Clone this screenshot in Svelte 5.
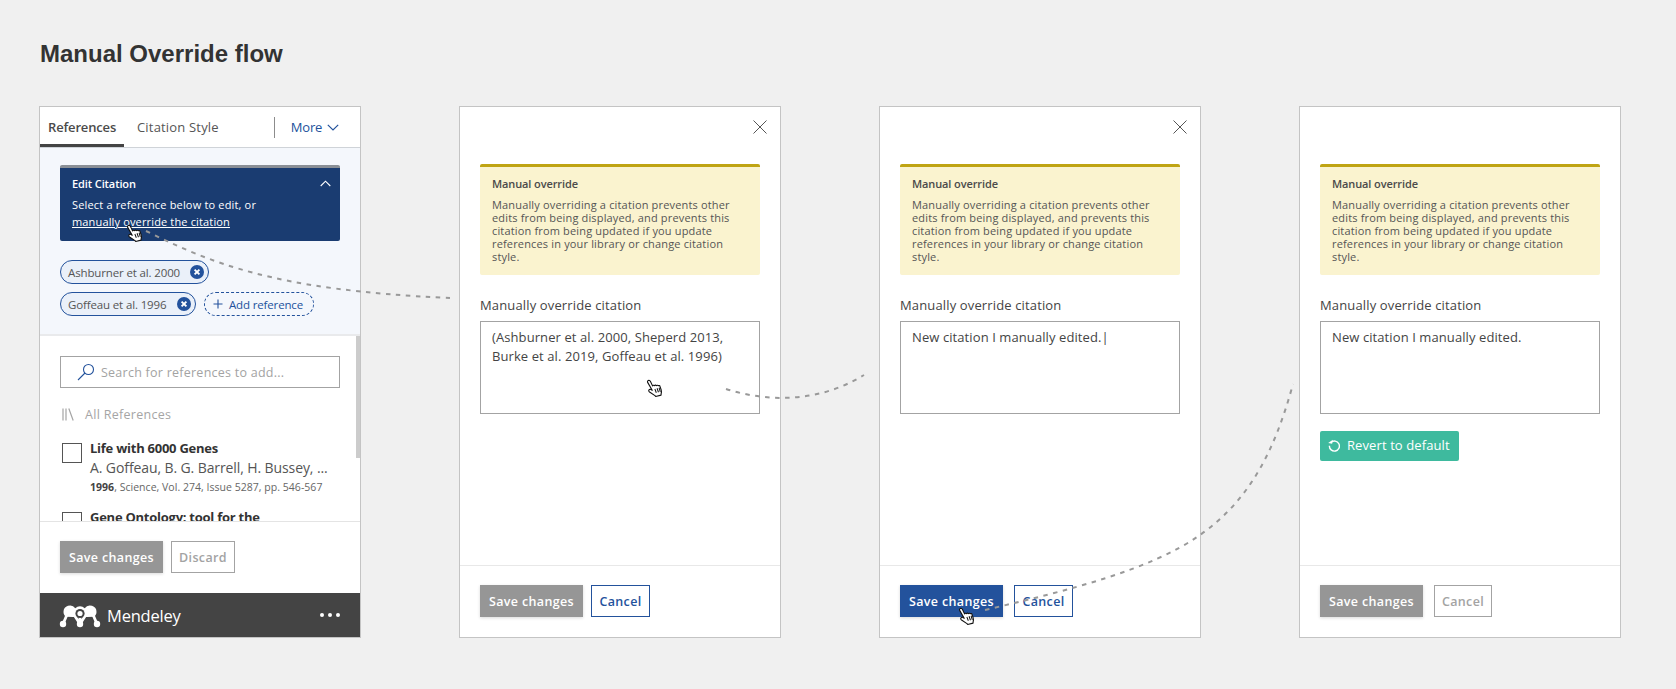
<script>
  const warningLines = [
    'Manually overriding a citation prevents other',
    'edits from being displayed, and prevents this',
    'citation from being updated if you update',
    'references in your library or change citation',
    'style.'
  ];
  const cursors = [
    { x: 126, y: 223 },
    { x: 646, y: 378 },
    { x: 958, y: 606 }
  ];
</script>

{#snippet hand(x, y)}
  <g transform="translate({x} {y}) rotate(-14 8 10)">
    <path class="hand" d="M4.2 1.4c.9-.3 1.7.3 1.9 1.2l1 5c.5-.6 1.5-.5 1.9.2.6-.5 1.6-.3 1.9.4.7-.4 1.6-.1 1.8.7.7-.3 1.4.1 1.5.9l.3 3.6c.1 1.6-.3 2.8-1 4l-.4 1.2H7.6l-.5-1-4.4-4.8c-.7-.8-.6-1.7 0-2.2.6-.5 1.4-.4 2 .2l1 1L3.2 3c-.2-.7.2-1.4 1-1.6z" />
    <path class="hand-lines" d="M8.6 11.2l.5 4M10.9 11l.4 4.2M13 11l.2 4.2" />
  </g>
{/snippet}

{#snippet warning()}
  <div class="warning">
    <div class="warning-title">Manual override</div>
    <p>{#each warningLines as l}<span>{l}</span>{/each}</p>
  </div>
  <div class="field-label">Manually override citation</div>
{/snippet}

{#snippet close()}
  <div class="close-row">
    <svg width="14" height="14" viewBox="0 0 14 14"><path d="M.5.5l13 13M13.5.5l-13 13" fill="none" stroke="#555" stroke-width="1" /></svg>
  </div>
{/snippet}

<main>
  <h1>Manual Override flow</h1>
  <div class="flow">
    <section class="panel">
      <nav class="tabs">
        <span class="tab active">References</span>
        <span class="tab">Citation Style</span>
        <span class="divider"></span>
        <span class="more">More
          <svg width="12" height="7" viewBox="0 0 12 7"><path d="M.8.8L6 6l5.2-5.2" fill="none" stroke="#23529c" stroke-width="1.2" /></svg>
        </span>
      </nav>
      <div class="citation-area">
        <div class="edit-box">
          <div class="edit-head">
            <strong>Edit Citation</strong>
            <svg width="11" height="7" viewBox="0 0 11 7"><path d="M.7 6L5.500 1.200 10.300 6" fill="none" stroke="#fff" stroke-width="1.100" /></svg>
          </div>
          <div class="edit-text">Select a reference below to edit, or</div>
          <a href="#top" class="edit-link">manually override the citation</a>
        </div>
        <div class="chips first">
          <span class="chip one">Ashburner et al. 2000
            <svg width="14" height="14" viewBox="0 0 14 14"><circle cx="7" cy="7" r="7" fill="#23529c" /><path d="M4.600 4.600l4.800 4.800M9.400 4.600l-4.800 4.800" stroke="#fff" stroke-width="1.900" /></svg>
          </span>
        </div>
        <div class="chips">
          <span class="chip two">Goffeau et al. 1996
            <svg width="14" height="14" viewBox="0 0 14 14"><circle cx="7" cy="7" r="7" fill="#23529c" /><path d="M4.600 4.600l4.800 4.800M9.400 4.600l-4.800 4.800" stroke="#fff" stroke-width="1.900" /></svg>
          </span>
          <span class="add"><svg width="10" height="10" viewBox="0 0 10 10"><path d="M5 .5v9M.5 5h9" stroke="#23529c" stroke-width="1.100" /></svg>Add reference</span>
        </div>
      </div>
      <div class="list-area">
        <div class="scrollbar"></div>
        <div class="search">
          <svg width="18" height="18" viewBox="0 0 18 18"><circle cx="11.500" cy="6.500" r="5" fill="none" stroke="#23529c" stroke-width="1.100" /><path d="M8 10L1 17" stroke="#23529c" stroke-width="1.100" /></svg>
          <span>Search for references to add...</span>
        </div>
        <div class="all-refs">
          <svg width="12" height="13" viewBox="0 0 12 13"><path d="M1 .5v12M4 .5v12M6.800.5l4.400 12" fill="none" stroke="#a5a5a5" stroke-width="1.200" /></svg>
          All References
        </div>
        <div class="ref">
          <span class="check"></span>
          <div>
            <div class="ref-title">Life with 6000 Genes</div>
            <div class="ref-authors">A. Goffeau, B. G. Barrell, H. Bussey, ...</div>
            <div class="ref-meta"><b>1996</b>, Science, Vol. 274, Issue 5287, pp. 546-567</div>
          </div>
        </div>
        <div class="ref second">
          <span class="check"></span>
          <div class="ref-title">Gene Ontology: tool for the</div>
        </div>
      </div>
      <div class="footer short">
        <button class="btn grey">Save changes</button>
        <button class="btn ghost discard">Discard</button>
      </div>
      <div class="brand">
        <svg class="logo" width="42" height="26" viewBox="0 0 42 26">
          <g fill="none" stroke="#fff" stroke-width="2.800" stroke-linecap="round">
            <path d="M10 8L4 22M14 11l7 11M28 11l-7 11M32 8l6 14M21 12v10" />
          </g>
          <path d="M4.500 10a6.500 6.500 0 0 1 11.800-3.800 6.500 6.500 0 0 1 9.400 0A6.500 6.500 0 0 1 37.500 10c0 2-1 3.800-2.600 4.800L28 15H14l-6.900-.2C5.500 13.800 4.500 12 4.500 10z" fill="#fff" />
          <circle cx="21" cy="11.500" r="4.600" fill="#444" />
          <circle cx="21" cy="11.500" r="2.600" fill="#fff" />
          <circle cx="4" cy="22" r="3.200" fill="#fff" /><circle cx="21" cy="22" r="3.200" fill="#fff" /><circle cx="38" cy="22" r="3.200" fill="#fff" />
        </svg>
        <span class="brand-name">Mendeley</span>
        <span class="dots"><i></i><i></i><i></i></span>
      </div>
    </section>

    <section class="panel">
      {@render close()}
      <div class="body">
        {@render warning()}
        <div class="textarea">(Ashburner et al. 2000, Sheperd 2013,<br />Burke et al. 2019, Goffeau et al. 1996)</div>
      </div>
      <div class="footer">
        <button class="btn grey">Save changes</button>
        <button class="btn outline">Cancel</button>
      </div>
    </section>

    <section class="panel">
      {@render close()}
      <div class="body">
        {@render warning()}
        <div class="textarea">New citation I manually edited.|</div>
      </div>
      <div class="footer wide">
        <button class="btn blue">Save changes</button>
        <button class="btn outline">Cancel</button>
      </div>
    </section>

    <section class="panel">
      <div class="close-row"></div>
      <div class="body">
        {@render warning()}
        <div class="textarea">New citation I manually edited.</div>
        <button class="revert">
          <svg width="12" height="13" viewBox="0 0 12 13"><path d="M3 3.400a5 5 0 1 1-1.600 3.400" fill="none" stroke="#fff" stroke-width="1.400" /><path d="M4.400.4v4.200H.4z" fill="#fff" transform="rotate(10 3 3)" /></svg>
          Revert to default
        </button>
      </div>
      <div class="footer wide">
        <button class="btn grey">Save changes</button>
        <button class="btn ghost">Cancel</button>
      </div>
    </section>
  </div>

  <svg class="overlay" width="1676" height="689" viewBox="0 0 1676 689">
    <g fill="none" stroke="#999" stroke-width="2" stroke-dasharray="4.500 5.500">
      <path d="M146 231C210 262 270 290 450 298" />
      <path d="M726 389C770 403 820 402 864 375" />
      <path d="M985 610C1070 590 1150 570 1200 535 1250 500 1275 450 1293 384" />
    </g>
    {#each cursors as c}
      {@render hand(c.x, c.y)}
    {/each}
  </svg>
</main>

<style>
  :global(body) { margin: 0; background: #f0f0f0; }
  main {
    position: relative;
    width: 1676px;
    height: 689px;
    box-sizing: border-box;
    padding: 40px 39px 0;
    font-family: "Open Sans", sans-serif;
    color: #444;
    overflow: hidden;
  }
  h1 {
    margin: 0 0 0 1px;
    font: bold 24px/28px "Liberation Sans", sans-serif;
    color: #333;
    height: 66px;
  }
  .flow { display: flex; gap: 98px; }
  .panel {
    width: 322px;
    height: 532px;
    box-sizing: border-box;
    border: 1px solid #c4c4c4;
    background: #fff;
    display: flex;
    flex-direction: column;
    overflow: hidden;
  }
  .overlay { position: absolute; left: 0; top: 0; pointer-events: none; }
  .hand { fill: #fff; stroke: #111; stroke-width: 1.1; stroke-linejoin: round; }
  .hand-lines { fill: none; stroke: #111; stroke-width: 1; }

  .tabs {
    display: flex; align-items: center; height: 41px; flex: none;
    box-sizing: border-box; border-bottom: 1px solid #cfd3d8; font-size: 13px;
  }
  .tab { height: 40px; box-sizing: border-box; line-height: 40px; padding: 0 8px; color: #555; letter-spacing: 0.18px; }
  .tab.active { border-bottom: 3px solid #444; font-weight: 600; color: #4a4a4a; margin-right: 5px; width: 84px; letter-spacing: -0.15px; }
  .divider { width: 1px; height: 21px; background: #8c8c8c; margin-left: 47px; margin-right: 16px; }
  .more { color: #23529c; display: flex; align-items: center; gap: 5px; letter-spacing: -0.2px; }

  .citation-area { background: #f4f7fc; height: 188px; flex: none; box-sizing: border-box; padding: 17px 20px 0; border-bottom: 2px solid #e9eaec; }
  .edit-box {
    height: 76px; box-sizing: border-box; background: #1a3c71; border-top: 3px solid #8a8f96;
    border-radius: 2px; padding: 7px 9px 0 12px; color: #fff; font-size: 11px; line-height: 17px; letter-spacing: 0.17px;
  }
  .edit-head { display: flex; justify-content: space-between; align-items: center; margin-bottom: 4px; }
  .edit-head strong { font-weight: 600; letter-spacing: -0.1px; }
  .edit-text { height: 17px; }
  .edit-link { color: #fff; text-decoration: underline; display: block; letter-spacing: 0.15px; }
  .chips { display: flex; gap: 8px; margin-top: 8px; }
  .chips.first { margin-top: 19px; }
  .chip {
    height: 24px; box-sizing: border-box; border: 1px solid #23529c; border-radius: 12px; background: #eaf0f9;
    display: inline-flex; align-items: center; justify-content: space-between;
    padding: 0 4px 0 7px; font-size: 11.5px; color: #555; letter-spacing: -0.14px;
  }
  .chip.one { width: 149px; }
  .chip.two { width: 136px; }
  .add {
    width: 110px; height: 24px; box-sizing: border-box; border: 1px dashed #23529c; border-radius: 12px;
    display: inline-flex; align-items: center; gap: 6px; padding-left: 8px;
    font-size: 11.5px; color: #23529c; letter-spacing: -0.15px;
  }

  .list-area { position: relative; height: 186px; flex: none; box-sizing: border-box; padding: 20px 20px 0; overflow: hidden; border-bottom: 1px solid #e4e4e4; }
  .scrollbar { position: absolute; right: 0; top: 0; width: 4px; height: 122px; background: #ccc; }
  .search {
    height: 32px; box-sizing: border-box; border: 1px solid #a3a3a3; display: flex; align-items: center;
    gap: 6px; padding-left: 16px; font-size: 12.5px; color: #a3a3a3; letter-spacing: 0.25px;
  }
  .all-refs { display: flex; align-items: center; gap: 11px; margin-top: 17px; padding-left: 2px; height: 18px; font-size: 12.5px; color: #a5a5a5; letter-spacing: 0.3px; }
  .ref { display: flex; gap: 8px; margin-top: 16px; padding-left: 2px; }
  .ref.second { margin-top: 13px; }
  .check { flex: none; width: 20px; height: 20px; box-sizing: border-box; border: 1px solid #555; margin-top: 4px; }
  .ref-title { font-size: 13px; font-weight: 700; color: #333; line-height: 18px; letter-spacing: -0.25px; white-space: nowrap; }
  .ref-authors { font-size: 14px; line-height: 22px; color: #555; letter-spacing: -0.1px; white-space: nowrap; }
  .ref-meta { font-size: 10.5px; line-height: 16px; color: #666; letter-spacing: 0.03px; white-space: nowrap; }
  .ref-meta b { color: #444; }

  .footer { height: 72px; flex: none; box-sizing: border-box; padding: 19px 20px 0; display: flex; gap: 8px; align-items: flex-start; border-top: 1px solid #e8e8e8; margin-top: auto; }
  .footer.short { border-top: 0; margin-top: 0; height: 71px; }
  .footer.wide { gap: 11px; }
  .btn {
    height: 32px; box-sizing: border-box; font-family: inherit; font-size: 12.5px; font-weight: 600; padding: 0;
    letter-spacing: 0.35px; border: 1px solid transparent; background: none;
  }
  .btn.grey { width: 103px; background: #969696; color: #fff; box-shadow: 0 1px 3px rgba(0,0,0,.15); }
  .btn.blue { width: 103px; background: #23529c; color: #fff; box-shadow: 0 1px 3px rgba(0,0,0,.15); }
  .btn.ghost { width: 58px; border-color: #a3a3a3; color: #a3a3a3; }
  .btn.ghost.discard { width: 64px; }
  .btn.outline { width: 59px; border-color: #23529c; color: #23529c; }

  .brand { flex: 1; background: #444; display: flex; align-items: center; padding: 0 20px; color: #fff; }
  .logo { margin-left: -1px; }
  .brand-name { font-size: 16.5px; margin-left: 6px; letter-spacing: -0.2px; }
  .dots { margin-left: auto; display: flex; gap: 4px; }
  .dots i { width: 4px; height: 4px; border-radius: 50%; background: #fff; }

  .close-row { height: 57px; flex: none; box-sizing: border-box; padding: 13px 13px 0 0; display: flex; justify-content: flex-end; align-items: flex-start; }
  .body { padding: 0 20px; }
  .warning {
    height: 111px; box-sizing: border-box; background: #faf3cf; border-top: 3px solid #bfa413; border-radius: 2px;
    padding: 9px 12px 0; font-size: 11px; color: #555;
  }
  .warning-title { font-weight: 600; line-height: 16px; color: #4a4a4a; letter-spacing: -0.1px; }
  .warning p { margin: 6px 0 0; line-height: 13px; letter-spacing: 0.16px; }
  .warning p span { display: block; white-space: nowrap; }
  .field-label { margin-top: 21px; height: 25px; line-height: 18px; font-size: 13px; color: #444; letter-spacing: 0.14px; }
  .textarea { height: 93px; box-sizing: border-box; border: 1px solid #a3a3a3; padding: 6px 11px; font-size: 13px; line-height: 19px; color: #444; letter-spacing: 0.09px; white-space: nowrap; }
  .revert {
    display: flex; align-items: center; gap: 7px; width: 139px; height: 30px; margin-top: 17px; box-sizing: border-box;
    border: 0; border-radius: 2px; background: #3eba9e; color: #fff; font-family: inherit; font-size: 13px; padding: 0 0 2px 8px; letter-spacing: 0.1px;
  }
</style>
